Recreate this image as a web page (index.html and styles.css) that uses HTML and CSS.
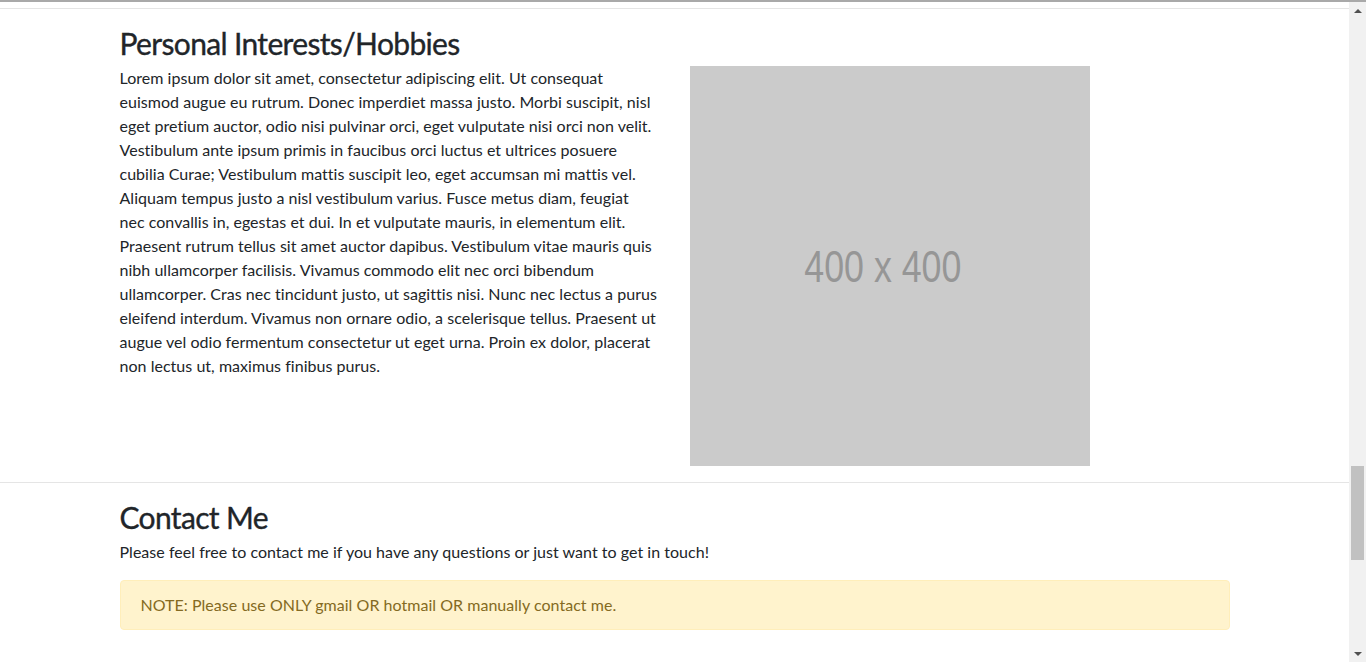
FILE: index.html
```html
<!DOCTYPE html>
<html lang="en">
<head>
<meta charset="utf-8">
<title>Personal Interests / Contact</title>
<link rel="stylesheet" href="styles.css">
</head>
<body>
<div class="topline"></div>
<div class="window">
  <main class="page">
    <hr class="divider first">
    <section class="container">
      <h2>Personal Interests/Hobbies</h2>
      <div class="row">
        <div class="col">
          <p>Lorem ipsum dolor sit amet, consectetur adipiscing elit. Ut consequat euismod augue eu rutrum. Donec imperdiet massa justo. Morbi suscipit, nisl eget pretium auctor, odio nisi pulvinar orci, eget vulputate nisi orci non velit. Vestibulum ante ipsum primis in faucibus orci luctus et ultrices posuere cubilia Curae; Vestibulum mattis suscipit leo, eget accumsan mi mattis vel. Aliquam tempus justo a nisl vestibulum varius. Fusce metus diam, feugiat<br>nec convallis in, egestas et dui. In et vulputate mauris, in elementum elit. Praesent rutrum tellus sit amet auctor dapibus. Vestibulum vitae mauris quis nibh ullamcorper facilisis. Vivamus commodo elit nec orci bibendum ullamcorper. Cras nec tincidunt justo, ut sagittis nisi. Nunc nec lectus a purus eleifend interdum. Vivamus non ornare odio, a scelerisque tellus. Praesent ut augue vel odio fermentum consectetur ut eget urna. Proin ex dolor, placerat non lectus ut, maximus finibus purus.</p>
        </div>
        <div class="col">
          <div class="placeholder"><span class="ph-text">400 x 400</span></div>
        </div>
      </div>
    </section>
    <hr class="divider">
    <section class="container">
      <h2>Contact Me</h2>
      <p>Please feel free to contact me if you have any questions or just want to get in touch!</p>
      <div class="alert">NOTE: Please use ONLY gmail OR hotmail OR manually contact me.</div>
    </section>
  </main>
  <div class="scrollbar">
    <div class="sb-btn"><span class="arrow up"></span></div>
    <div class="sb-track"><div class="sb-thumb"></div></div>
    <div class="sb-btn"><span class="arrow down"></span></div>
  </div>
</div>
</body>
</html>
```
FILE: styles.css
```css
* { box-sizing: border-box; }
html, body {
  margin: 0;
  padding: 0;
  height: 662px;
  overflow: hidden;
  background: #fff;
}
body {
  font-family: "Lato", "Liberation Sans", sans-serif;
  font-size: 16px;
  line-height: 24px;
  letter-spacing: 0.03px;
  color: #212529;
}
.topline {
  height: 2px;
  background: #a9a9a9;
}
.window {
  display: flex;
  height: 660px;
}
.page {
  flex: 1;
  min-width: 0;
  overflow: hidden;
}
.divider {
  margin: 0;
  border: 0;
  border-top: 1px solid #e5e5e5;
}
.divider.first { margin-top: 6px; }
.container {
  width: 1140px;
  margin: 0 auto;
  padding: 15px 15px 16px;
}
h2 {
  margin: 0 0 4px;
  font-size: 30px;
  line-height: 38px;
  font-weight: 400;
  letter-spacing: -0.65px;
  -webkit-text-stroke: 0.35px #212529;
}
p { margin: 0 0 16px; }
.row {
  display: flex;
  margin: 0 -15px;
}
.col {
  width: 570px;
  padding: 0 15px;
}
.placeholder {
  width: 400px;
  height: 400px;
  background: #cbcbcb;
  display: flex;
  align-items: center;
  justify-content: center;
}
.ph-text {
  font-family: "Liberation Sans", sans-serif;
  font-size: 45px;
  line-height: 1;
  letter-spacing: 0;
  color: #969696;
  transform: translateX(-7px) scaleX(0.795);
  white-space: nowrap;
}
.alert {
  padding: 12px 20px;
  background: #fff3cd;
  border: 1px solid #ffeeba;
  border-radius: 4px;
  color: #846a22;
}
.scrollbar {
  width: 17px;
  background: #f1f1f1;
  display: flex;
  flex-direction: column;
}
.sb-btn {
  height: 17px;
  display: flex;
  align-items: center;
  justify-content: center;
}
.arrow {
  width: 0;
  height: 0;
  border-left: 4px solid transparent;
  border-right: 4px solid transparent;
}
.arrow.up { border-bottom: 4px solid #505050; }
.arrow.down { border-top: 4px solid #505050; }
.sb-track {
  flex: 1;
  padding: 447px 2px 0;
}
.sb-thumb {
  height: 94px;
  background: #c1c1c1;
}
```
